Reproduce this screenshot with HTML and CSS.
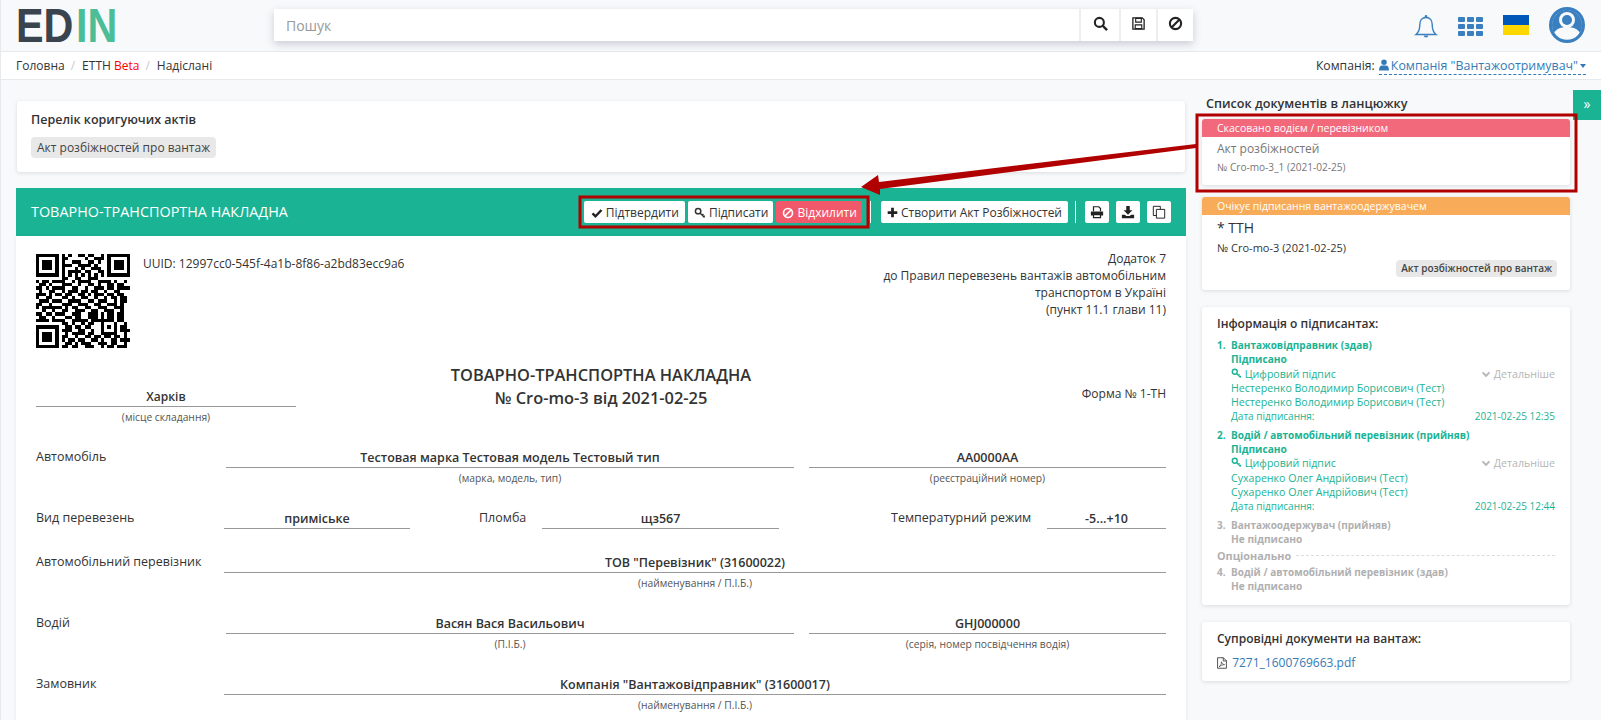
FILE: index.html
```html
<!DOCTYPE html>
<html lang="uk">
<head>
<meta charset="UTF-8">
<meta name="viewport" content="width=device-width, initial-scale=1.0">
<title>ТТН</title>
<link rel="stylesheet" href="styles.css">
</head>
<body>
<svg class="sprite" width="0" height="0">
    <symbol id="i-ban" viewBox="0 0 16 16"><circle cx="8" cy="8" r="6" fill="none" stroke="currentColor" stroke-width="2.2"/><path d="M4 12L12 4" stroke="currentColor" stroke-width="2.2"/></symbol>
    <symbol id="i-key" viewBox="0 0 16 16"><circle cx="5.5" cy="5.5" r="3.6" fill="none" stroke="currentColor" stroke-width="2"/><path d="M8 8l6 6M11 11l1.6-1.6M13 13l1.4-1.4" fill="none" stroke="currentColor" stroke-width="1.8"/></symbol>
    <symbol id="i-chevron" viewBox="0 0 16 16"><path d="M2.5 5.5L8 11l5.5-5.5" fill="none" stroke="currentColor" stroke-width="3"/></symbol>
</svg>

<header class="topbar">
    <div class="logo"><span class="logo-text"><span class="logo-dark">ED</span><span class="logo-green">IN</span></span></div>
    <div class="search">
        <input class="search-input" type="text" placeholder="Пошук">
        <button class="search-btn search-btn-wide">
            <svg class="icon-15" viewBox="0 0 16 16"><circle cx="6.8" cy="6.8" r="4.8" fill="none" stroke="#222" stroke-width="2.2"/><path d="M10.4 10.4L15 15" stroke="#222" stroke-width="2.6"/></svg>
        </button>
        <button class="search-btn">
            <svg class="icon-15" viewBox="0 0 16 16"><path d="M2 2h10l2 2v10H2z" fill="none" stroke="#222" stroke-width="1.4"/><path d="M5 2.5h6v4H5zM4.500 9.500h7v4h-7z" fill="none" stroke="#222" stroke-width="1.2"/></svg>
        </button>
        <button class="search-btn">
            <svg class="icon-15 icon-dark"><use href="#i-ban"/></svg>
        </button>
    </div>
    <div class="top-icons">
        <svg class="bell" viewBox="0 0 24 26"><path d="M12 3.500c-4 0-6.200 3-6.200 7 0 5.500-1.300 8-3.800 10h20c-2.500-2-3.800-4.500-3.800-10 0-4-2.200-7-6.200-7z" fill="none" stroke="#3a7fc0" stroke-width="1.4"/><circle cx="12" cy="2.400" r="1.300" fill="#3a7fc0"/><path d="M9.500 21.500a2.600 2.600 0 0 0 5 0z" fill="#3a7fc0"/></svg>
        <div class="apps">
            <i></i><i></i><i></i><i></i><i></i><i></i><i></i><i></i><i></i>
        </div>
        <div class="flag"></div>
        <svg class="avatar" viewBox="0 0 36 36"><circle cx="18" cy="18" r="18" fill="#3a7fc0"/><circle cx="18" cy="18" r="14.800" fill="#f8f9fb"/><path d="M3 18a15 15 0 0 1 30 0c0 3-1 6-2 8-2-4-7-6-13-6s-11 2-13 6c-1-2-2-5-2-8z" fill="#3a7fc0"/><circle cx="18" cy="13" r="8" fill="#f8f9fb"/><circle cx="18" cy="13" r="5" fill="#3a7fc0"/></svg>
    </div>
</header>

<nav class="crumbs">
    <div class="crumb-list">
        <span>Головна</span><span class="crumb-sep">/</span><span>ЕТТН <span class="beta">Beta</span></span><span class="crumb-sep">/</span><span>Надіслані</span>
    </div>
    <div class="company">
        Компанія:
        <span class="company-link"><svg class="icon-user" viewBox="0 0 12 14"><circle cx="6" cy="3.800" r="3.300" fill="#337ab7"/><path d="M0 13.500c0-4 1.500-6 3.500-6h5c2 0 3.500 2 3.500 6z" fill="#337ab7"/></svg>Компанія "Вантажоотримувач"<i class="caret"></i></span>
    </div>
</nav>

<div class="toggle-tab">»</div>

<main class="content">
    <section class="left-col">
        <div class="card acts">
            <div class="card-title">Перелік коригуючих актів</div>
            <span class="tag tag-big">Акт розбіжностей про вантаж</span>
        </div>

        <div class="doc-bar">
            <div class="doc-bar-title">ТОВАРНО-ТРАНСПОРТНА НАКЛАДНА</div>
            <div class="doc-actions">
                <button class="btn btn-main btn-first">
                    <svg class="icon-12" viewBox="0 0 16 16"><path d="M2 8.500l4 4 8-8.500" fill="none" stroke="#222" stroke-width="3.200"/></svg>
                    Підтвердити
                </button>
                <button class="btn btn-main"><svg class="icon-12"><use href="#i-key"/></svg> Підписати</button>
                <button class="btn btn-main btn-danger"><svg class="icon-12"><use href="#i-ban"/></svg> Відхилити</button>
                <span class="bar-sep"></span>
                <button class="btn btn-create">
                    <svg class="icon-11" viewBox="0 0 16 16"><path d="M6 1h4v5h5v4h-5v5H6v-5H1V6h5z" fill="#222"/></svg>
                    Створити Акт Розбіжностей
                </button>
                <span class="bar-sep bar-sep-end"></span>
                <button class="btn btn-icon">
                    <svg class="icon-14" viewBox="0 0 16 16"><path d="M4 7V2h6l2 2v3" fill="none" stroke="#222" stroke-width="1.400"/><path d="M1 7.500h14V12h-2.500v-1.800h-9V12H1z" fill="#222"/><path d="M4 11h8v3.300H4z" fill="none" stroke="#222" stroke-width="1.400"/></svg>
                </button>
                <button class="btn btn-icon">
                    <svg class="icon-14" viewBox="0 0 16 16"><path d="M6 1h4v5h3l-5 5-5-5h3z" fill="#222"/><path d="M1 11h3.500l1.500 1.500h4L11.500 11H15v4H1z" fill="#222"/></svg>
                </button>
                <button class="btn btn-icon">
                    <svg class="icon-14" viewBox="0 0 16 16"><path d="M5 5h9.500v10H5z" fill="#fff" stroke="#222" stroke-width="1.100"/><path d="M5 12H1.500V1.500h8V5" fill="none" stroke="#222" stroke-width="1.100"/></svg>
                </button>
            </div>
        </div>

        <div class="doc">
            <div class="doc-head">
                <svg class="qr" viewBox="0 0 29 29" shape-rendering="crispEdges">
                    <path fill-rule="evenodd" d="M0 0h7v7H0zM1 1v5h5V1zM2 2h3v3H2zM22 0h7v7h-7zM23 1v5h5V1zM24 2h3v3h-3zM0 22h7v7H0zM1 23v5h5v-5zM2 24h3v3H2z"/>
                    <path fill="none" stroke="#000" d="M8 .5h1m1 0h1m2 0h2m1 0h2m2 0h1M8 1.500h2m5 0h1m2 0h3M8 2.500h1m2 0h3m2 0h2m1 0h1M8 3.500h3m2 0h4m1 0h1M8 4.500h1m3 0h1m1 0h1m2 0h3M8 5.500h1m1 0h4m1 0h2m2 0h2M8 6.500h1m1 0h1m1 0h1m1 0h1m1 0h1m1 0h1m1 0h1M8 7.500h2m2 0h2m2 0h3M0 8.500h1m1 0h2m1 0h4m2 0h1m1 0h4m2 0h4m1 0h1m2 0h1M1 9.500h2m1 0h1m3 0h3m2 0h1m2 0h2m1 0h1m2 0h2m1 0h2M0 10.500h2m1 0h1m1 0h4m2 0h2m2 0h1m2 0h3m1 0h2m1 0h4M1 11.500h1m2 0h2m2 0h1m1 0h3m1 0h2m1 0h2m2 0h1m2 0h2M0 12.500h3m1 0h1m1 0h2m1 0h2m2 0h2m1 0h1m1 0h3m1 0h2m1 0h2M0 13.500h1m2 0h2m3 0h2m1 0h1m2 0h2m2 0h1m2 0h1m1 0h2m1 0h2M1 14.500h3m1 0h3m2 0h4m2 0h2m1 0h3m2 0h1m1 0h2M0 15.500h2m2 0h1m3 0h3m2 0h3m2 0h2m2 0h3m1 0h1M0 16.500h1m1 0h6m1 0h1m1 0h2m2 0h2m2 0h3m2 0h3M2 17.500h1m2 0h1m2 0h2m2 0h3m2 0h2m2 0h3m2 0h1M0 18.500h2m1 0h2m1 0h3m2 0h3m2 0h3m1 0h1m1 0h2m1 0h2M1 19.500h2m2 0h1m3 0h2m1 0h2m2 0h3m1 0h1m1 0h2m1 0h2M0 20.500h4m1 0h4m2 0h5m1 0h2m0 0h5m1 0h2M8 21.500h2m1 0h1m2 0h1m1 0h2M20 21.500h1m3 0h1m2 0h1M9 22.500h2m1 0h2m1 0h2M20 22.500h1m1 0h1m1 0h1m1 0h2M8 23.500h3m2 0h2m2 0h1M20 23.500h1m3 0h1m1 0h3M9 24.500h1m1 0h4m1 0h2M20 24.500h5m2 0h1M8 25.500h2m2 0h1m2 0h2m1 0h2m1 0h2m1 0h2m1 0h1M8 26.500h1m1 0h2m1 0h2m2 0h2m1 0h1m2 0h2m1 0h4M9 27.500h2m1 0h1m1 0h3m2 0h3m1 0h2m2 0h1M8 28.500h2m1 0h2m2 0h3m2 0h1m1 0h2m1 0h3"/>
                </svg>
                <div class="uuid">UUID: 12997cc0-545f-4a1b-8f86-a2bd83ecc9a6</div>
                <div class="appendix">
                    Додаток 7<br>
                    до Правил перевезень вантажів автомобільним<br>
                    транспортом в Україні<br>
                    (пункт 11.1 глави 11)
                </div>
            </div>

            <div class="doc-title-row">
                <div class="field">
                    <div class="field-value field-place">Харків</div>
                    <div class="field-note">(місце складання)</div>
                </div>
                <h1 class="doc-title">ТОВАРНО-ТРАНСПОРТНА НАКЛАДНА<br>№ Cro-mo-3 від 2021-02-25</h1>
                <div class="form-no">Форма № 1-ТН</div>
            </div>

            <div class="row row-split">
                <div class="label">Автомобіль</div>
                <div class="field">
                    <div class="field-value">Тестовая марка Тестовая модель Тестовый тип</div>
                    <div class="field-note">(марка, модель, тип)</div>
                </div>
                <div class="field">
                    <div class="field-value">АА0000АА</div>
                    <div class="field-note">(реєстраційний номер)</div>
                </div>
            </div>

            <div class="row row-triple">
                <div class="label">Вид перевезень</div>
                <div class="field"><div class="field-value">приміське</div></div>
                <div class="label label-seal">Пломба</div>
                <div class="field"><div class="field-value">щз567</div></div>
                <div class="label label-temp">Температурний режим</div>
                <div class="field"><div class="field-value">-5...+10</div></div>
            </div>

            <div class="row row-wide">
                <div class="label">Автомобільний перевізник</div>
                <div class="field">
                    <div class="field-value">ТОВ "Перевізник" (31600022)</div>
                    <div class="field-note">(найменування / П.І.Б.)</div>
                </div>
            </div>

            <div class="row row-split">
                <div class="label">Водій</div>
                <div class="field">
                    <div class="field-value">Васян Вася Васильович</div>
                    <div class="field-note">(П.І.Б.)</div>
                </div>
                <div class="field">
                    <div class="field-value">GHJ000000</div>
                    <div class="field-note">(серія, номер посвідчення водія)</div>
                </div>
            </div>

            <div class="row row-wide">
                <div class="label">Замовник</div>
                <div class="field">
                    <div class="field-value">Компанія "Вантажовідправник" (31600017)</div>
                    <div class="field-note">(найменування / П.І.Б.)</div>
                </div>
            </div>
        </div>
    </section>

    <aside class="right-col">
        <div class="chain-title">Список документів в ланцюжку</div>

        <div class="card chain-card">
            <div class="chain-status status-red">Скасовано водієм / перевізником</div>
            <div class="chain-body muted">
                <div class="chain-name">Акт розбіжностей</div>
                <div class="chain-no">№ Cro-mo-3_1 (2021-02-25)</div>
            </div>
        </div>

        <div class="card chain-card chain-active">
            <div class="chain-status status-orange">Очікує підписання вантажоодержувачем</div>
            <div class="chain-body">
                <div class="chain-name">* ТТН</div>
                <div class="chain-no">№ Cro-mo-3 (2021-02-25)</div>
                <div class="chain-tags"><span class="tag">Акт розбіжностей про вантаж</span></div>
            </div>
        </div>

        <div class="card signers">
            <div class="card-title">Інформація о підписантах:</div>

            <div class="signer signed">
                <div class="signer-head"><span class="signer-no">1.</span>Вантажовідправник (здав)</div>
                <div class="signer-body">
                    <div class="signer-state">Підписано</div>
                    <div class="signer-line">
                        <span><svg class="icon-11"><use href="#i-key"/></svg> Цифровий підпис</span>
                        <span class="more"><svg class="icon-10"><use href="#i-chevron"/></svg> Детальніше</span>
                    </div>
                    <div>Нестеренко Володимир Борисович (Тест)</div>
                    <div>Нестеренко Володимир Борисович (Тест)</div>
                    <div class="signer-line signer-date"><span>Дата підписання:</span><span>2021-02-25 12:35</span></div>
                </div>
            </div>

            <div class="signer signed">
                <div class="signer-head"><span class="signer-no">2.</span>Водій / автомобільний перевізник (прийняв)</div>
                <div class="signer-body">
                    <div class="signer-state">Підписано</div>
                    <div class="signer-line">
                        <span><svg class="icon-11"><use href="#i-key"/></svg> Цифровий підпис</span>
                        <span class="more"><svg class="icon-10"><use href="#i-chevron"/></svg> Детальніше</span>
                    </div>
                    <div>Сухаренко Олег Андрійович (Тест)</div>
                    <div>Сухаренко Олег Андрійович (Тест)</div>
                    <div class="signer-line signer-date"><span>Дата підписання:</span><span>2021-02-25 12:44</span></div>
                </div>
            </div>

            <div class="signer">
                <div class="signer-head"><span class="signer-no">3.</span>Вантажоодержувач (прийняв)</div>
                <div class="signer-body"><div class="signer-state">Не підписано</div></div>
            </div>

            <div class="optional"><span>Опціонально</span><i></i></div>

            <div class="signer signer-last">
                <div class="signer-head"><span class="signer-no">4.</span>Водій / автомобільний перевізник (здав)</div>
                <div class="signer-body"><div class="signer-state">Не підписано</div></div>
            </div>
        </div>

        <div class="card attachments">
            <div class="card-title">Супровідні документи на вантаж:</div>
            <div class="attachment">
                <svg class="icon-pdf" viewBox="0 0 12 14"><path d="M.7.7h7l3.600 3.600v9H.7z" fill="none" stroke="#333" stroke-width="1"/><path d="M7.500.7v3.800h3.800" fill="none" stroke="#333" stroke-width="1"/><path d="M2.500 11.500c2-1 3-4 2.800-6 .5 2 1.500 3 3.800 3.500-2.500 0-4.600 1-6.600 2.500z" fill="none" stroke="#333" stroke-width=".8"/></svg>
                <a class="link" href="#">7271_1600769663.pdf</a>
            </div>
        </div>
    </aside>
</main>

<!-- red marks drawn over the screenshot -->
<svg class="marks" width="1601" height="720">
    <rect x="1197" y="115" width="379" height="76" fill="none" stroke="#b00000" stroke-width="3"/>
    <rect x="580" y="197" width="288" height="30" fill="none" stroke="#b00000" stroke-width="3"/>
    <path d="M1196 144L1196 148L880 189L880 195L861 187L878 175L879 182z" fill="#b00000"/>
</svg>
</body>
</html>
```

FILE: styles.css
```css
html, body {
    margin: 0;
    height: 720px;
    overflow: hidden;
}
body {
    position: relative;
    font-family: "Open Sans", "Noto Sans", sans-serif;
    font-size: 12px;
    line-height: 17px;
    color: #333;
    background-color: #f8f9fb;
    border-left: 1px solid #e7eaec;
    box-sizing: border-box;
}
button {
    font-family: inherit;
    cursor: pointer;
}
.sprite {
    position: absolute;
}
.icon-10 { width: 10px; height: 10px; vertical-align: -1px; }
.icon-11 { width: 11px; height: 11px; vertical-align: -1px; }
.icon-12 { width: 12px; height: 12px; vertical-align: -2px; }
.icon-14 { width: 14px; height: 14px; }
.icon-15 { width: 15px; height: 15px; }
.icon-dark { color: #222; }

/* top bar */
.topbar {
    display: flex;
    align-items: flex-start;
    height: 51px;
    box-sizing: border-box;
    padding-left: 15px;
}
.logo {
    width: 258px;
    height: 51px;
    font-family: "Liberation Sans", sans-serif;
    font-weight: 700;
    font-size: 48px;
    line-height: 51px;
}
.logo-text {
    display: inline-block;
    transform: scaleX(0.86);
    transform-origin: left center;
    white-space: nowrap;
}
.logo-dark {
    color: #3a444e;
}
.logo-green {
    margin-left: 3px;
    color: #4dbd98;
}
.search {
    display: flex;
    width: 919px;
    height: 32px;
    margin-top: 9px;
    background-color: #fff;
    box-shadow: 0 3px 8px rgba(60, 70, 100, 0.25);
}
.search-input {
    flex: 1;
    border: 0;
    outline: 0;
    padding: 0 12px;
    font-family: inherit;
    font-size: 14px;
    color: #333;
}
.search-input::placeholder {
    color: #999;
}
.search-btn {
    width: 37px;
    padding: 0;
    border: 0;
    border-left: 2px solid #eee;
    background-color: #fff;
}
.search-btn-wide {
    width: 40px;
}
.top-icons {
    display: flex;
    align-items: flex-start;
    margin-left: 221px;
}
.bell {
    width: 24px;
    height: 26px;
    margin-top: 14px;
}
.apps {
    display: grid;
    grid-template-columns: repeat(3, 7px);
    grid-auto-rows: 5px;
    gap: 2px 2px;
    margin: 17px 0 0 20px;
}
.apps i {
    background-color: #3a7fc0;
    border-radius: 1px;
}
.flag {
    width: 26px;
    height: 20px;
    margin: 15px 0 0 20px;
    background: linear-gradient(#0057b7 50%, #ffd700 50%);
}
.avatar {
    width: 36px;
    height: 36px;
    margin: 7px 0 0 20px;
}

/* breadcrumb */
.crumbs {
    display: flex;
    justify-content: space-between;
    align-items: center;
    height: 29px;
    box-sizing: border-box;
    padding: 0 15px;
    background-color: #fff;
    border-top: 1px solid #e7eaec;
    border-bottom: 1px solid #e7eaec;
}
.crumb-sep {
    margin: 0 7px 0 6px;
    color: #ccc;
}
.beta {
    color: #f00;
}
.company {
    font-size: 12.2px;
}
.company-link {
    display: inline-block;
    margin-left: 1px;
    font-size: 12.4px;
    color: #337ab7;
    border-bottom: 1px dashed #337ab7;
    line-height: 17px;
}
.icon-user {
    width: 10px;
    height: 12px;
    margin-right: 2px;
    vertical-align: -1px;
}
.caret {
    display: inline-block;
    margin-left: 2px;
    vertical-align: 2px;
    border-top: 4px solid #337ab7;
    border-left: 3px solid transparent;
    border-right: 3px solid transparent;
}
.toggle-tab {
    position: absolute;
    top: 90px;
    right: 0;
    width: 28px;
    height: 30px;
    background-color: #1ab394;
    color: #fff;
    font-size: 14px;
    line-height: 28px;
    text-align: center;
}

/* page columns */
.content {
    display: flex;
    gap: 16px;
    padding: 15px 0 0 15px;
}
.left-col {
    width: 1170px;
    flex: none;
}
.right-col {
    width: 368px;
    flex: none;
}
.card {
    background-color: #fff;
    border-radius: 3px;
    box-shadow: 0 1px 4px rgba(0, 0, 0, 0.12);
}
.card-title {
    font-weight: 600;
    font-size: 12px;
    color: #333;
}
.tag {
    display: inline-block;
    padding: 0 5px;
    background-color: #e8e8e8;
    border-radius: 4px;
    font-size: 10px;
    font-weight: 600;
    line-height: 17px;
    color: #444;
}
.tag-big {
    margin-top: 9px;
    padding: 0 6px;
    font-size: 12px;
    font-weight: 400;
    line-height: 21px;
}
.acts {
    height: 71px;
    margin: 6px 1px 16px;
    padding: 10px 14px 0;
    box-sizing: border-box;
}
.acts .card-title {
    font-size: 12.5px;
}

/* document bar */
.doc-bar {
    display: flex;
    align-items: center;
    justify-content: space-between;
    height: 48px;
    padding: 0 15px;
    background-color: #1ab394;
}
.doc-bar-title {
    color: #fff;
    font-size: 14.4px;
    line-height: 48px;
}
.doc-actions {
    display: flex;
    align-items: center;
    gap: 3px;
}
.btn {
    height: 22px;
    padding: 0 6px;
    border: 0;
    border-radius: 2px;
    background-color: #fff;
    font-size: 12px;
    color: #333;
    white-space: nowrap;
}
.btn-main {
    padding: 0 5px 0 6px;
}
.btn-first {
    padding: 0 6px 0 7px;
}
.btn-danger {
    background-color: #f1596b;
    color: #fff;
}
.btn-create {
    margin-left: 4px;
}
.btn-icon {
    width: 24px;
    padding: 0;
    margin-left: 4px;
}
.btn-icon svg {
    display: block;
    margin: auto;
}
.bar-sep {
    width: 1px;
    height: 22px;
    margin: 0 3px 0 5px;
    background-color: #fff;
}
.bar-sep-end {
    margin: 0 2px 0 4px;
}

/* document body */
.doc {
    height: 484px;
    padding: 14px 20px 0;
    background-color: #fff;
    box-shadow: 0 1px 4px rgba(0, 0, 0, 0.08);
}
.doc-head {
    display: flex;
    align-items: flex-start;
}
.qr {
    width: 94px;
    height: 94px;
    margin-top: 4px;
    flex: none;
}
.uuid {
    margin: 5px 0 0 13px;
}
.appendix {
    margin-left: auto;
    text-align: right;
}
.doc-title-row {
    display: grid;
    grid-template-columns: 260px 1fr 260px;
    margin-top: 14px;
}
.doc-title {
    margin: 0;
    padding-top: 1px;
    font-size: 16.4px;
    font-weight: 600;
    line-height: 23px;
    text-align: center;
}
.doc-title-row .field {
    margin-top: 23px;
}
.form-no {
    margin-top: 23px;
    text-align: right;
}
.row {
    display: grid;
    margin-top: 22px;
}
.row-split {
    grid-template-columns: 175px 568px 1fr;
    column-gap: 15px;
}
.row-wide {
    grid-template-columns: 188px 1fr;
}
.row-triple {
    grid-template-columns: 188px 186px 132px 237px 268px 1fr;
}
.label {
    padding-top: 2px;
    font-size: 12.5px;
    line-height: 18px;
    white-space: nowrap;
}
.label-seal {
    padding-left: 69px;
}
.label-temp {
    padding-left: 112px;
}
.field-value {
    padding-top: 2px;
    font-size: 12.5px;
    line-height: 19px;
    font-weight: 600;
    text-align: center;
    border-bottom: 1px solid #999;
}
.field-place {
    font-size: 12px;
}
.field-note {
    margin-top: 3px;
    font-size: 10.3px;
    line-height: 14px;
    text-align: center;
    color: #555;
}

/* document chain */
.chain-title {
    margin: 0 0 6px 4px;
    font-weight: 600;
    font-size: 12.6px;
    line-height: 18px;
}
.chain-card {
    height: 66px;
    overflow: hidden;
}
.chain-active {
    height: 93px;
    margin-top: 12px;
}
.chain-status {
    height: 18px;
    padding-left: 15px;
    font-size: 10.5px;
    line-height: 18px;
    color: #fff;
}
.status-red {
    background-color: #f1697a;
}
.status-orange {
    background-color: #f8ac59;
}
.chain-body {
    padding: 3px 15px 0;
}
.chain-name {
    font-size: 14px;
    line-height: 20px;
}
.chain-no {
    font-size: 11px;
    line-height: 20px;
}
.muted {
    padding-top: 2px;
    color: #777;
}
.muted .chain-name {
    font-size: 12px;
}
.muted .chain-no {
    margin-top: -2px;
    font-size: 10.1px;
}
.chain-tags {
    margin: 1px -2px 0 0;
    text-align: right;
}

/* signers */
.signers {
    height: 298px;
    margin-top: 17px;
    padding: 8px 15px 0;
    box-sizing: border-box;
}
.signer {
    margin-top: 4px;
    font-size: 10.6px;
    line-height: 14.3px;
    color: #b0b0b0;
}
.signers .card-title {
    margin-bottom: 6px;
}
.signer.signed {
    color: #1ab394;
}
.signer-head {
    display: flex;
    font-size: 10px;
    font-weight: 700;
}
.signer-no {
    width: 14px;
}
.signer-body {
    padding-left: 14px;
}
.signer-state {
    font-size: 10.2px;
    font-weight: 700;
}
.signer-line {
    display: flex;
    justify-content: space-between;
}
.signer-date {
    font-size: 10px;
}
.more {
    color: #b5b5b5;
}
.optional {
    display: flex;
    align-items: center;
    gap: 5px;
    margin-top: 2px;
    font-size: 10.8px;
    font-weight: 700;
    line-height: 15px;
    color: #b0b0b0;
}
.optional i {
    flex: 1;
    border-top: 1px dashed #ddd;
}
.signer-last {
    margin-top: 2px;
}

/* attachments */
.attachments {
    height: 59px;
    margin-top: 17px;
    padding: 8px 15px 0;
    box-sizing: border-box;
}
.attachment {
    margin-top: 7px;
    font-size: 12px;
}
.icon-pdf {
    width: 10px;
    height: 12px;
    vertical-align: -2px;
    margin-right: 2px;
}
.link {
    color: #337ab7;
    text-decoration: none;
}

/* overlay */
.marks {
    position: absolute;
    top: 0;
    left: -1px;
    pointer-events: none;
}
```
